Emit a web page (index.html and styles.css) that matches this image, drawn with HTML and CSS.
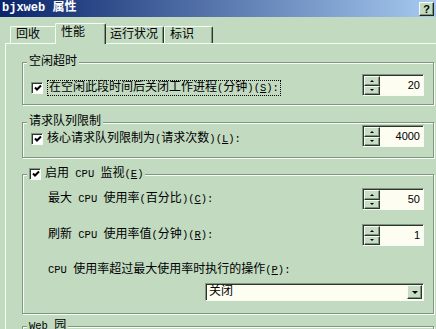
FILE: index.html
```html
<!DOCTYPE HTML>
<html>
<head>
  <meta charset="utf-8">
  <title>bjxweb 属性</title>
  <link rel="stylesheet" href="styles.css">
</head>
<body>

  <div class="titlebar">
    <span class="caption">bjxweb 属性</span>
    <span class="helpbtn">?</span>
  </div>

  <div class="tabs">
    <div class="tab">回收</div>
    <div class="tab active">性能</div>
    <div class="tab wide">运行状况</div>
    <div class="tab">标识</div>
  </div>

  <div class="pane">

    <!-- 空闲超时 -->
    <div class="group g1">
      <div class="cap">空闲超时</div>
      <div class="row">
        <span class="box"><svg width="8" height="8" viewBox="0 0 8 8"><path d="M1 3.5 L3 5.5 L7 1.5" fill="none" stroke="#000" stroke-width="2"/></svg></span>
        <span class="label focus">在空闲此段时间后关闭工作进程<span class="en">(</span>分钟<span class="en">)(<u>S</u>):</span></span>
        <div class="spin">
          <div class="arrows"><span class="up"></span><span class="down"></span></div>
          <div class="val">20</div>
        </div>
      </div>
    </div>

    <!-- 请求队列限制 -->
    <div class="group g2">
      <div class="cap">请求队列限制</div>
      <div class="row">
        <span class="box"><svg width="8" height="8" viewBox="0 0 8 8"><path d="M1 3.5 L3 5.5 L7 1.5" fill="none" stroke="#000" stroke-width="2"/></svg></span>
        <span class="label">核心请求队列限制为<span class="en">(</span>请求次数<span class="en">)(<u>L</u>):</span></span>
        <div class="spin">
          <div class="arrows"><span class="up"></span><span class="down"></span></div>
          <div class="val">4000</div>
        </div>
      </div>
    </div>

    <!-- CPU 监视 -->
    <div class="group g3">
      <div class="cap"><span class="box"><svg width="8" height="8" viewBox="0 0 8 8"><path d="M1 3.5 L3 5.5 L7 1.5" fill="none" stroke="#000" stroke-width="2"/></svg></span>启用<span class="en"> CPU </span>监视<span class="en">(<u>E</u>)</span></div>
      <div class="row ind r1">
        <span>最大<span class="en"> CPU </span>使用率<span class="en">(</span>百分比<span class="en">)(<u>C</u>):</span></span>
        <div class="spin">
          <div class="arrows"><span class="up"></span><span class="down"></span></div>
          <div class="val">50</div>
        </div>
      </div>
      <div class="row ind r2">
        <span>刷新<span class="en"> CPU </span>使用率值<span class="en">(</span>分钟<span class="en">)(<u>R</u>):</span></span>
        <div class="spin">
          <div class="arrows"><span class="up"></span><span class="down"></span></div>
          <div class="val">1</div>
        </div>
      </div>
      <div class="line ind r3"><span class="en">CPU </span>使用率超过最大使用率时执行的操作<span class="en">(<u>P</u>):</span></div>
      <div class="combo">
        <div class="cval">关闭</div>
        <div class="dropbtn"></div>
      </div>
    </div>

    <!-- Web 园 -->
    <div class="group g4">
      <div class="cap"><span class="en">Web </span>园</div>
    </div>

  </div>

</body>
</html>
```

FILE: styles.css
```css
body {
  margin: 0;
  width: 436px;
  height: 329px;
  overflow: hidden;
  background: #c1dac0;
  color: #000;
  font: 12px/14px "Liberation Mono", "Noto Sans CJK SC", monospace;
}

.en {
  font-size: 10.5px;
}

/* заголовок окна */
.titlebar {
  display: flex;
  justify-content: space-between;
  align-items: flex-start;
  height: 17px;
  background: linear-gradient(to right, #0a246a, #a6caf0);
}

.caption {
  padding: 2px 0 0 2px;
  color: #fff;
  font-weight: bold;
  line-height: 13px;
}

.helpbtn {
  box-sizing: border-box;
  width: 15px;
  height: 14px;
  margin: 2px 2px 0 0;
  border: 1px solid;
  border-color: #f6fdf5 #1e261e #1e261e #f6fdf5;
  box-shadow: inset -1px -1px 0 #7f977f;
  background: #c1dac0;
  text-align: center;
  font: bold 11px/12px "Liberation Sans", sans-serif;
}

/* вкладки */
.tabs {
  display: flex;
  align-items: flex-end;
  height: 20px;
  margin-top: 6px;
  padding-left: 10px;
}

.tab {
  box-sizing: border-box;
  width: 47px;
  height: 17px;
  padding: 1px 0 0 5px;
  border: 1px solid;
  border-bottom: 0;
  border-color: #f6fdf5 #2c362c #f6fdf5 #f6fdf5;
  border-radius: 2px 2px 0 0;
  box-shadow: inset -1px 0 0 #7f977f;
  background: #c1dac0;
}

.tab.wide { width: 60px; }
.tab:last-child { width: 49px; }

.tab.active {
  position: relative;
  z-index: 1;
  width: 51px;
  height: 21px;
  margin: 0 -2px -1px;
  padding-top: 2px;
}

.pane {
  margin-left: 5px;
  padding-left: 16px;
  border-top: 1px solid #f6fdf5;
  border-left: 1px solid #f6fdf5;
}

/* рамки групп */
.group {
  box-sizing: border-box;
  width: 412px;
  padding: 0 9px 0 8px;
  border: 1px solid #7f977f;
  box-shadow: 1px 1px 0 #f6fdf5, inset 1px 1px 0 #f6fdf5;
}

.cap {
  width: max-content;
  height: 14px;
  margin: -8px 0 0 -4px;
  padding: 0 2px;
  background: #c1dac0;
}

.cap .box {
  display: inline-flex;
  margin: 0 4px 0 0;
  vertical-align: -1px;
}

.g1 { margin-top: 18px; padding-bottom: 8px; }
.g1 .row { margin-top: 5px; }

.g2 { margin-top: 17px; padding-bottom: 10px; }
.g2 .row { margin-top: -4px; }

.g3 { margin-top: 16px; padding-bottom: 12px; }
.r1 { margin-top: 7px; }
.r2 { margin-top: 14px; }
.r3 { margin-top: 17px; }

.g4 { margin-top: 12px; height: 4px; }

.row {
  display: flex;
  align-items: center;
}

.ind { padding-left: 17px; }

.label { margin-top: 5px; }

.focus {
  padding: 0 1px;
  border: 1px dotted #000;
}

/* флажок */
.box {
  display: flex;
  align-items: center;
  justify-content: center;
  box-sizing: border-box;
  width: 12px;
  height: 12px;
  margin: 5px 4px 0 0;
  padding: 1px 0 0 1px;
  border: 1px solid;
  border-color: #7f977f #f6fdf5 #f6fdf5 #7f977f;
  box-shadow: inset 1px 1px 0 #2c362c;
  background: #fff;
}

/* счётчик */
.spin {
  display: flex;
  box-sizing: border-box;
  width: 62px;
  height: 22px;
  margin-left: auto;
  padding: 1px 0 0 1px;
  border: 1px solid;
  border-color: #7f977f #f6fdf5 #f6fdf5 #7f977f;
  box-shadow: inset 1px 1px 0 #2c362c;
}

.arrows {
  display: flex;
  flex-direction: column;
  width: 16px;
}

.arrows span {
  display: flex;
  flex: 1;
  align-items: center;
  justify-content: center;
  border: 1px solid;
  border-color: #f6fdf5 #2c362c #2c362c #f6fdf5;
  box-shadow: inset -1px -1px 0 #7f977f;
  background: #c8dcc6;
}

.arrows .up::after {
  content: "";
  border-left: 2px solid transparent;
  border-right: 2px solid transparent;
  border-bottom: 2px solid #000;
}

.arrows .down::after {
  content: "";
  border-left: 2px solid transparent;
  border-right: 2px solid transparent;
  border-top: 2px solid #000;
}

.val {
  flex: 1;
  padding: 2px 3px 0 0;
  background: #fdfdf2;
  text-align: right;
  font: 11px/14px "Liberation Sans", sans-serif;
}

/* выпадающий список */
.combo {
  display: flex;
  box-sizing: border-box;
  width: 219px;
  height: 18px;
  margin: 6px 0 0 auto;
  padding: 1px;
  border: 1px solid;
  border-color: #7f977f #f6fdf5 #f6fdf5 #7f977f;
  box-shadow: inset 1px 1px 0 #2c362c;
  background: #fdfdf2;
}

.cval {
  flex: 1;
  padding-left: 2px;
  line-height: 14px;
}

.dropbtn {
  display: flex;
  align-items: center;
  justify-content: center;
  box-sizing: border-box;
  width: 15px;
  border: 1px solid;
  border-color: #f6fdf5 #2c362c #2c362c #f6fdf5;
  box-shadow: inset -1px -1px 0 #7f977f;
  background: #c8dcc6;
}

.dropbtn::after {
  content: "";
  border-left: 3px solid transparent;
  border-right: 3px solid transparent;
  border-top: 3px solid #000;
}
```
